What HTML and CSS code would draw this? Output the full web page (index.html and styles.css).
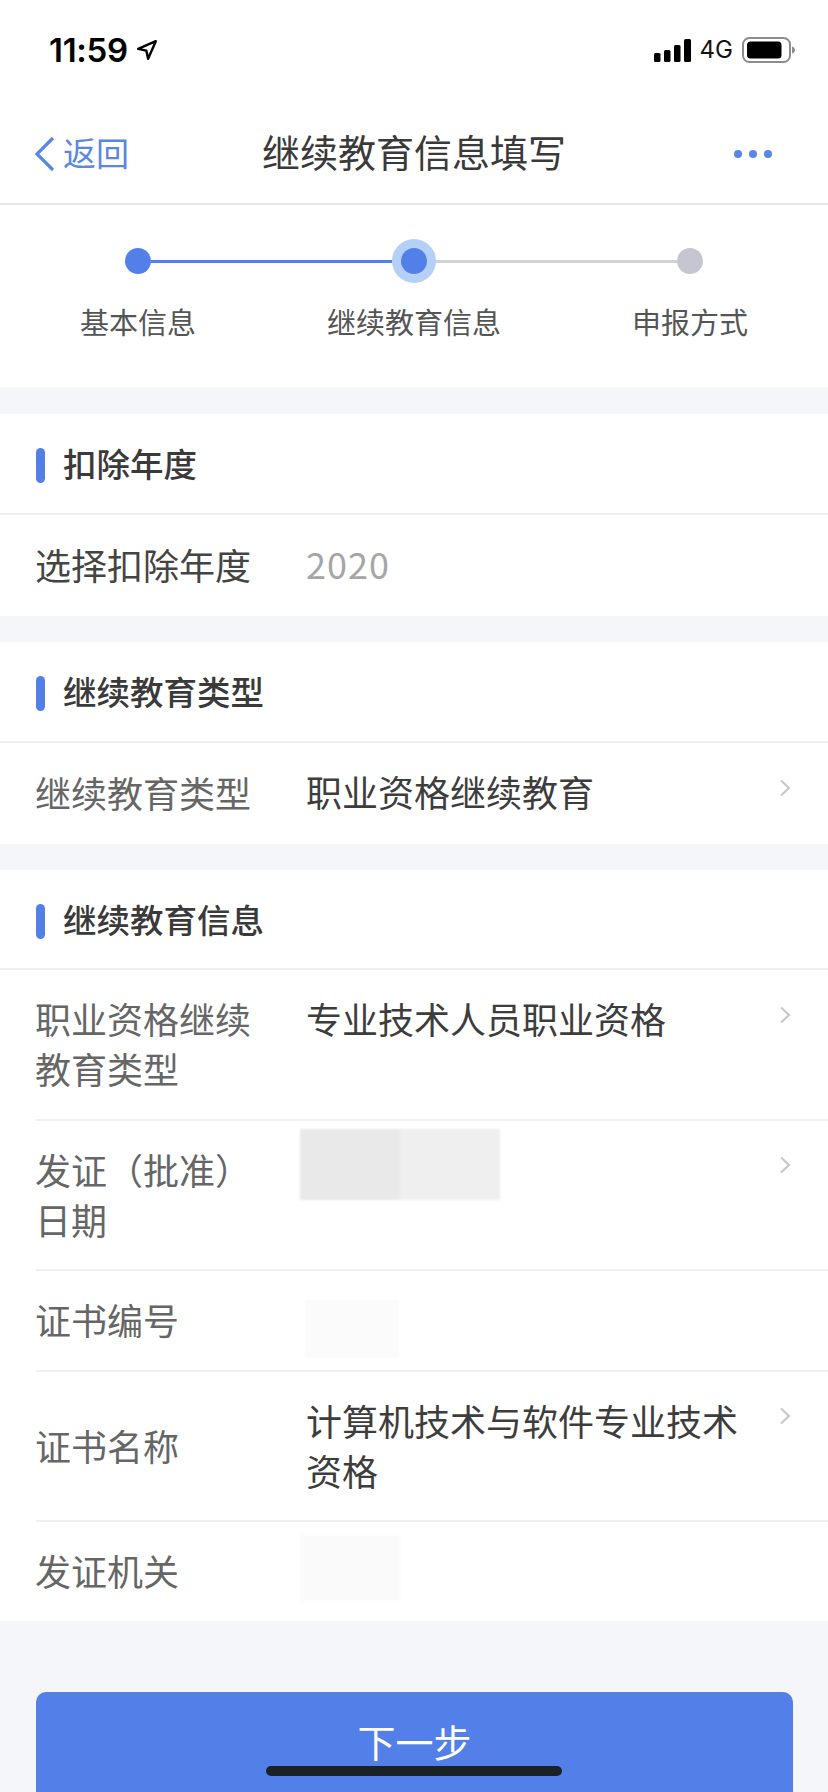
FILE: index.html
```html
<!DOCTYPE html>
<html lang="zh-CN">
<head>
<meta charset="utf-8">
<title>继续教育信息填写</title>
<link rel="stylesheet" href="styles.css">
</head>
<body>
<div class="page">
  <header class="top">
    <div class="status">
      <div class="status-left">
        <span class="time">11:59</span>
        <svg class="loc" viewBox="0 0 20 20" width="22" height="22"><path d="M2 9 L18 2 L11 18 L9.4 10.6 Z" fill="none" stroke="#000" stroke-width="2.2" stroke-linejoin="round"/></svg>
      </div>
      <div class="status-right">
        <svg viewBox="0 0 37 23" width="37" height="23"><rect x="0" y="14" width="6.5" height="9" rx="1.5"/><rect x="10" y="11" width="6.5" height="12" rx="1.5"/><rect x="20" y="6" width="6.5" height="17" rx="1.5"/><rect x="30" y="0" width="7" height="23" rx="1.5"/></svg>
        <span class="net">4G</span>
        <svg viewBox="0 0 53 26" width="53" height="26"><rect x="1" y="1" width="47" height="24" rx="6.5" fill="none" stroke="#8c8c8c" stroke-width="2"/><rect x="5" y="4.5" width="34.500" height="17" rx="3.500" fill="#000"/><path d="M50 9.500 C52 10 53 11.500 53 13 C53 14.500 52 16 50 16.500 Z" fill="#8c8c8c"/></svg>
      </div>
    </div>
    <nav class="nav">
      <a class="back">
        <svg viewBox="0 0 21 36" width="21" height="36"><path d="M19 2 L3 18 L19 34" fill="none" stroke="#5a87e6" stroke-width="3.200"/></svg>
        <span class="back-text">返回</span>
      </a>
      <h1 class="title">继续教育信息填写</h1>
      <div class="more"><i></i><i></i><i></i></div>
    </nav>
  </header>

  <section class="steps">
    <div class="track">
      <span class="dot"></span>
      <span class="line line-done"></span>
      <span class="halo"><span class="dot"></span></span>
      <span class="line"></span>
      <span class="dot dot-off"></span>
    </div>
    <div class="step-labels">
      <span>基本信息</span>
      <span>继续教育信息</span>
      <span>申报方式</span>
    </div>
  </section>

  <section class="card card-first">
    <h2 class="head"><i class="bar"></i>扣除年度</h2>
    <div class="row row-solo">
      <span class="label label-dark">选择扣除年度</span>
      <span class="value value-muted">2020</span>
    </div>
  </section>

  <section class="card">
    <h2 class="head"><i class="bar"></i>继续教育类型</h2>
    <div class="row row-solo">
      <span class="label">继续教育类型</span>
      <span class="value">职业资格继续教育</span>
      <svg class="chev" viewBox="0 0 12 18" width="12" height="18"><path d="M2 1.500 L10 9 L2 16.500" fill="none" stroke="#c6c6ca" stroke-width="2"/></svg>
    </div>
  </section>

  <section class="card">
    <h2 class="head head-short"><i class="bar"></i>继续教育信息</h2>
    <div class="rows">
      <div class="row row-tall">
        <span class="label">职业资格继续<br>教育类型</span>
        <span class="value">专业技术人员职业资格</span>
        <svg class="chev" viewBox="0 0 12 18" width="12" height="18"><path d="M2 1.500 L10 9 L2 16.500" fill="none" stroke="#c6c6ca" stroke-width="2"/></svg>
      </div>
      <div class="row row-tall">
        <span class="label">发证（批准）<br>日期</span>
        <span class="mask mask-date"><i></i><i></i></span>
        <svg class="chev" viewBox="0 0 12 18" width="12" height="18"><path d="M2 1.500 L10 9 L2 16.500" fill="none" stroke="#c6c6ca" stroke-width="2"/></svg>
      </div>
      <div class="row">
        <span class="label">证书编号</span>
        <span class="mask mask-number"></span>
      </div>
      <div class="row row-tall">
        <span class="label">证书名称</span>
        <span class="value value-wrap">计算机技术与软件专业技术资格</span>
        <svg class="chev" viewBox="0 0 12 18" width="12" height="18"><path d="M2 1.500 L10 9 L2 16.500" fill="none" stroke="#c6c6ca" stroke-width="2"/></svg>
      </div>
      <div class="row">
        <span class="label">发证机关</span>
        <span class="mask mask-office"></span>
      </div>
    </div>
  </section>

  <div class="actions">
    <button class="next">下一步</button>
  </div>
  <div class="home"></div>
</div>
</body>
</html>
```

FILE: styles.css
```css
* { box-sizing: border-box; }
html, body { margin: 0; padding: 0; height: 1792px; overflow: hidden; }
body {
  background: #f4f6f9;
  font-family: "Noto Sans CJK SC", "Noto Sans", sans-serif;
  color: #333;
}
.page { position: relative; width: 828px; height: 1792px; overflow: hidden; }

.top { background: #fff; }
.status {
  height: 88px;
  padding: 36px 33px 0 49px;
  display: flex;
  justify-content: space-between;
  align-items: flex-start;
}
.status-left { display: flex; align-items: center; height: 28px; gap: 8px; }
.time {
  font-family: Inter, "Liberation Sans", sans-serif;
  font-size: 33px;
  font-weight: 600;
  line-height: 28px;
  color: #000;
  letter-spacing: -0.3px;
}
.status-right { display: flex; align-items: center; height: 28px; gap: 9px; }
.net {
  font-family: Inter, "Liberation Sans", sans-serif;
  font-size: 24px;
  line-height: 28px;
  color: #111;
}

.nav {
  height: 117px;
  padding: 16px 34px 0;
  border-bottom: 2px solid #e6e6e6;
  display: grid;
  grid-template-columns: 1fr auto 1fr;
  align-items: center;
}
.back {
  display: flex;
  align-items: center;
  gap: 8px;
  color: #5a87e6;
  font-size: 33px;
  line-height: 40px;
}
.back-text { margin-bottom: 3px; }
.title {
  margin: 0 0 5px;
  font-size: 38px;
  font-weight: 400;
  line-height: 50px;
  color: #3a3a3a;
}
.more { justify-self: end; display: flex; gap: 7px; margin-right: 22px; }
.more i { width: 8px; height: 8px; border-radius: 50%; background: #5a87e6; }

.steps { background: #fff; height: 182px; padding-top: 34px; }
.track { display: flex; align-items: center; padding: 0 125px; height: 44px; }
.dot { display: block; flex: none; width: 26px; height: 26px; border-radius: 50%; background: #5380e8; }
.dot-off { background: #c5c6cf; }
.line { flex: 1; height: 3px; background: #d2d2d6; }
.line-done { background: #5380e8; }
.halo {
  flex: none;
  width: 44px;
  height: 44px;
  border-radius: 50%;
  background: #b5d0f6;
  display: flex;
  align-items: center;
  justify-content: center;
}
.step-labels {
  margin-top: 18px;
  display: grid;
  grid-template-columns: repeat(3, 276px);
  text-align: center;
  font-size: 29px;
  line-height: 40px;
  color: #555;
}

.card { background: #fff; margin-top: 26px; }
.card-first { margin-top: 27px; }
.head {
  margin: 0;
  height: 101px;
  padding: 0 0 2px 36px;
  border-bottom: 2px solid #efefef;
  display: flex;
  align-items: center;
  gap: 18px;
  font-size: 33.5px;
  font-weight: 500;
  color: #3a3a3a;
}
.head-short { height: 100px; }
.bar { width: 9px; height: 35px; margin-top: 6px; border-radius: 4.500px; background: #5380e8; }

.row {
  height: 101px;
  margin-left: 36px;
  display: flex;
  align-items: flex-start;
  font-size: 36px;
  line-height: 50px;
  border-top: 2px solid #f0f0f0;
}
.row-tall { height: 150px; }
.row-solo { height: 101px; border-top: 0; }
.rows .row:first-child { height: 149px; border-top: 0; }
.label {
  flex: none;
  width: 270px;
  align-self: center;
  margin: 0 0 3px -1px;
  color: #666;
}
.label-dark { color: #444; }
.value { flex: 1; margin: 23px 0 0 1px; color: #3d3d3d; }
.row-solo .value { margin-top: 23px; }
.value-muted { color: #a6a6a6; letter-spacing: 1px; }
.value-wrap { max-width: 436px; }
.chev { flex: none; margin: 35px 37px 0 auto; }
.row-solo .chev, .rows .row:first-child .chev { margin-top: 36px; }

.mask { display: block; flex: none; margin-left: -5px; filter: blur(1px); }
.mask-date { display: flex; width: 200px; height: 71px; margin-top: 8px; }
.mask-date i { flex: 1; background: #e9e9e9; }
.mask-date i + i { background: #efefef; }
.mask-number { width: 94px; height: 58px; margin-top: 29px; margin-left: 0; background: #fbfbfb; }
.mask-office { width: 100px; height: 66px; margin-top: 13px; background: #fafafa; }

.actions { padding: 71px 35px 0 36px; }
.next {
  display: block;
  width: 100%;
  height: 110px;
  border: 0;
  border-radius: 10px;
  background: #5380e8;
  color: #fff;
  font-family: inherit;
  font-size: 38px;
  line-height: 50px;
  padding: 24px 0 36px;
}
.home {
  position: absolute;
  left: 266px;
  top: 1766px;
  width: 296px;
  height: 10px;
  border-radius: 5px;
  background: #1a2226;
}
```
